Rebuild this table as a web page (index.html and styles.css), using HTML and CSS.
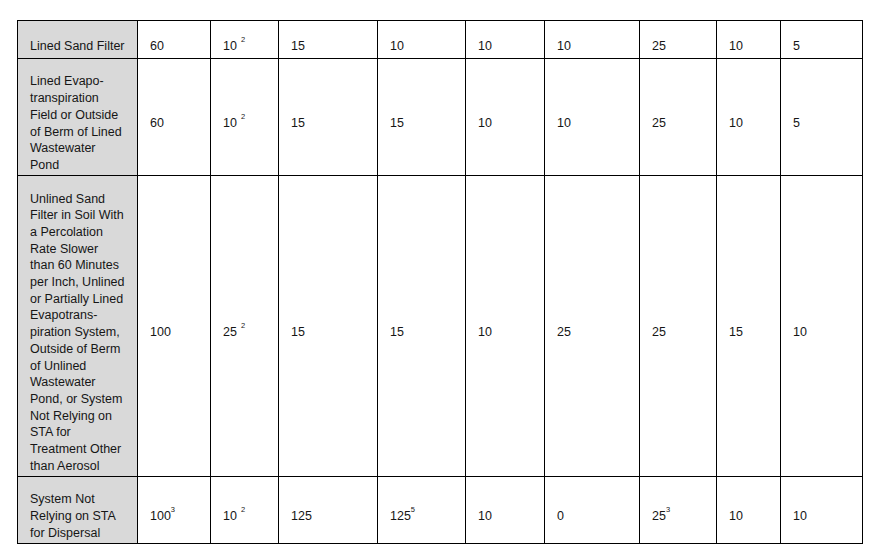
FILE: index.html
```html
<!DOCTYPE html>
<html>
<head>
<meta charset="utf-8">
<link rel="stylesheet" href="styles.css">
</head>
<body>
<div class="page">
<table class="grid">
<colgroup>
<col class="c1"><col class="c2"><col class="c3"><col class="c4"><col class="c5"><col class="c6"><col class="c7"><col class="c8"><col class="c9"><col class="c10">
</colgroup>
<tr class="r1">
<th>Lined Sand Filter</th>
<td>60</td><td>10<sup class="sup gap">2</sup></td><td>15</td><td>10</td><td>10</td><td>10</td><td>25</td><td>10</td><td>5</td>
</tr>
<tr class="r2">
<th>Lined Evapo-<br>transpiration<br>Field or Outside<br>of Berm of Lined<br>Wastewater<br>Pond</th>
<td>60</td><td>10<sup class="sup gap">2</sup></td><td>15</td><td>15</td><td>10</td><td>10</td><td>25</td><td>10</td><td>5</td>
</tr>
<tr class="r3">
<th>Unlined Sand<br>Filter in Soil With<br>a Percolation<br>Rate Slower<br>than 60 Minutes<br>per Inch, Unlined<br>or Partially Lined<br>Evapotrans-<br>piration System,<br>Outside of Berm<br>of Unlined<br>Wastewater<br>Pond, or System<br>Not Relying on<br>STA for<br>Treatment Other<br>than Aerosol</th>
<td>100</td><td>25<sup class="sup gap">2</sup></td><td>15</td><td>15</td><td>10</td><td>25</td><td>25</td><td>15</td><td>10</td>
</tr>
<tr class="r4">
<th>System Not<br>Relying on STA<br>for Dispersal</th>
<td>100<sup class="sup">3</sup></td><td>10<sup class="sup gap">2</sup></td><td>125</td><td>125<sup class="sup">5</sup></td><td>10</td><td>0</td><td>25<sup class="sup">3</sup></td><td>10</td><td>10</td>
</tr>
</table>
</div>
</body>
</html>
```
FILE: styles.css
```css
html, body {
  margin: 0;
  padding: 0;
  background: #ffffff;
}
.page {
  padding: 20px 0 0 17px;
}
.grid {
  border-collapse: collapse;
  table-layout: fixed;
  width: 845px;
  font-family: "Liberation Sans", Arial, sans-serif;
  font-size: 12.5px;
  line-height: 16.7px;
  color: #161616;
}
.c1 { width: 120px; }
.c2 { width: 73px; }
.c3 { width: 68px; }
.c4 { width: 99px; }
.c5 { width: 88px; }
.c6 { width: 79px; }
.c7 { width: 95px; }
.c8 { width: 77px; }
.c9 { width: 64px; }
.c10 { width: 82px; }
.grid th, .grid td {
  border: 1px solid #000;
  padding: 14px 4px 1px 12px;
  vertical-align: middle;
  text-align: left;
  font-weight: normal;
  white-space: nowrap;
}
.grid th {
  background: #d9d9d9;
}
.r1 { height: 38px; }
.r2 { height: 117px; }
.r3 { height: 301px; }
.r4 { height: 67px; }
.sup {
  font-size: 7.5px;
  line-height: 0;
  vertical-align: 8px;
}
.gap {
  margin-left: 4px;
}
```
